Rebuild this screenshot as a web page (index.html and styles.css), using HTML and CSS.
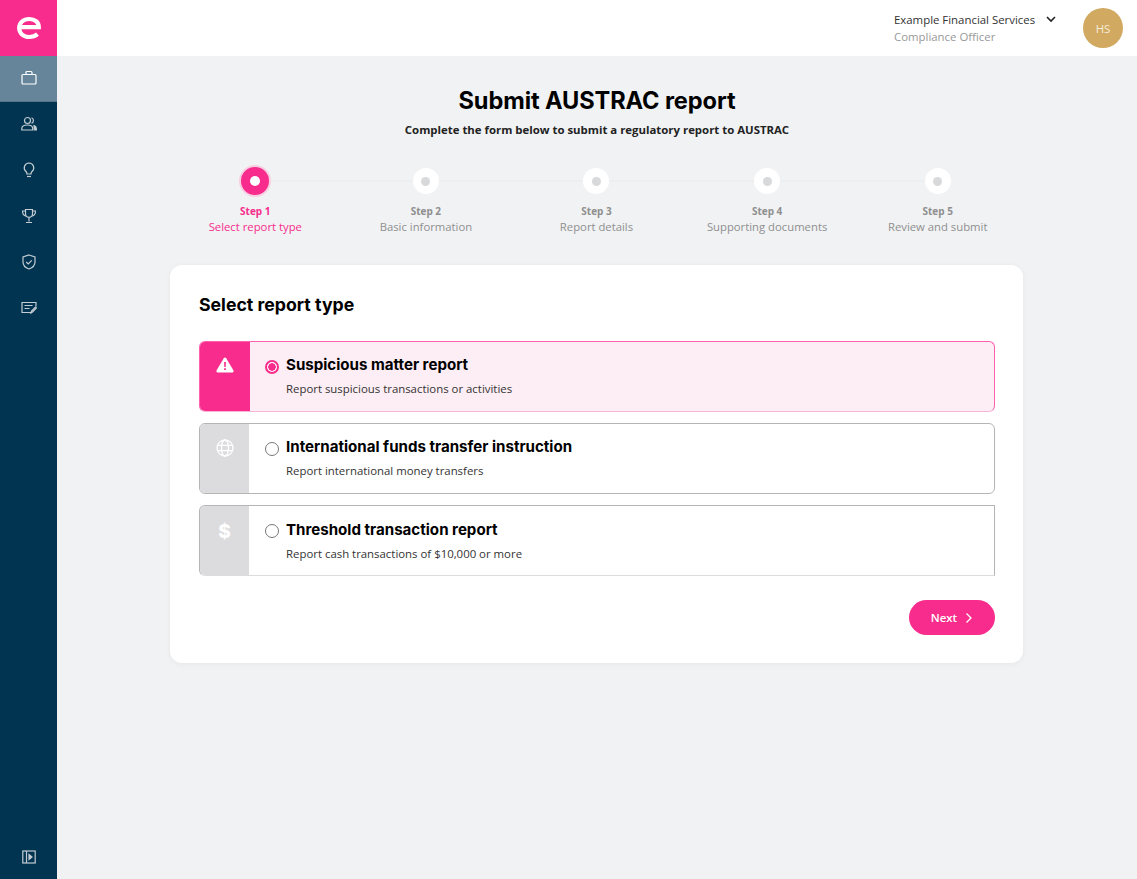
FILE: index.html
```html
<!DOCTYPE html>
<html lang="en">
<head>
<meta charset="utf-8">
<title>Submit AUSTRAC report</title>
<link rel="stylesheet" href="styles.css">
</head>
<body>
<div class="app">
  <aside class="sidebar">
    <div class="logo">
      <svg width="26" height="24" viewBox="0 0 26 24"><path d="M3.200 11.200h19.600c0-5-4-8.200-9.600-8.200C7.300 3 3.200 6.800 3.200 12s4.100 9 10 9c3.300 0 6.200-1 8.300-2.800" fill="none" stroke="#fff" stroke-width="4.200"/></svg>
    </div>
    <nav class="nav">
      <a class="nav-item active"><svg class="ic" viewBox="0 0 16 16"><rect x="1" y="4.500" width="14" height="9.500" rx="1"/><path d="M5 4.500V2.500a1 1 0 0 1 1-1h4a1 1 0 0 1 1 1v2"/></svg></a>
      <a class="nav-item"><svg class="ic" viewBox="0 0 16 16"><circle cx="6.500" cy="4.500" r="3"/><path d="M.8 14v-1.500c0-2.300 2-3.500 5.700-3.500s5.200 1.200 5.200 3.500V14z"/><path d="M10.500 1.700a3 3 0 0 1 0 5.600"/><path class="ic-solid" d="M13 9.500c1.500.5 2.300 1.500 2.300 3V14h-2z"/></svg></a>
      <a class="nav-item"><svg class="ic" viewBox="0 0 16 16"><path d="M8 1a4.800 4.800 0 0 0-3 8.500c.7.700 1 1.300 1 2.500h4c0-1.200.3-1.800 1-2.500A4.800 4.800 0 0 0 8 1z"/><path d="M6 14.500h4"/></svg></a>
      <a class="nav-item"><svg class="ic" viewBox="0 0 16 16"><path d="M4.500 1.500h7v4.300a3.500 3.500 0 0 1-7 0z"/><path d="M4.500 3H1.500c0 3 1 4.500 3.500 5M11.500 3h3c0 3-1 4.500-3.500 5M8 9.500v4M5 14.500h6"/></svg></a>
      <a class="nav-item"><svg class="ic" viewBox="0 0 16 16"><path d="M8 1l6 2v5c0 3.500-2.500 5.800-6 7-3.500-1.200-6-3.500-6-7V3z"/><path d="M5.200 8l2 2 3.600-3.600"/></svg></a>
      <a class="nav-item"><svg class="ic" viewBox="0 0 16 16"><path d="M11 12.500H1v-10h14v4"/><path d="M3.500 5.500h8M3.500 8.500h5M10 13l.5-2 4-4 1 1-4 4z"/></svg></a>
    </nav>
    <a class="nav-item collapse"><svg class="ic" viewBox="0 0 16 16"><rect x="1.800" y="2" width="12.400" height="12"/><path d="M5.500 2v12"/><path class="ic-solid" d="M8 5.500L11 8l-3 2.500z"/></svg></a>
  </aside>
  <div class="content">
    <header class="topbar">
      <div class="org">
        <div class="org-row"><span class="org-name">Example Financial Services</span><svg class="chev" width="10" height="7" viewBox="0 0 10 7"><path d="M1 1l4 4 4-4" fill="none" stroke="#222" stroke-width="1.600"/></svg></div>
        <div class="org-role">Compliance Officer</div>
      </div>
      <div class="avatar">HS</div>
    </header>
    <main class="main">
      <h1 class="title">Submit AUSTRAC report</h1>
      <p class="subtitle">Complete the form below to submit a regulatory report to AUSTRAC</p>
      <ol class="steps">
        <li class="step current"><span class="dot"></span><span class="step-no">Step 1</span><span class="step-name">Select report type</span></li>
        <li class="step"><span class="dot"></span><span class="step-no">Step 2</span><span class="step-name">Basic information</span></li>
        <li class="step"><span class="dot"></span><span class="step-no">Step 3</span><span class="step-name">Report details</span></li>
        <li class="step"><span class="dot"></span><span class="step-no">Step 4</span><span class="step-name">Supporting documents</span></li>
        <li class="step"><span class="dot"></span><span class="step-no">Step 5</span><span class="step-name">Review and submit</span></li>
      </ol>
      <section class="card">
        <h2 class="card-title">Select report type</h2>
        <div class="options">
          <div class="option selected">
            <div class="opt-icon"><svg width="18" height="16" viewBox="0 0 18 16"><path d="M9 .5c.5 0 .9.300 1.200.800l7.300 12.300c.5.900-.1 2-1.200 2H1.700c-1.100 0-1.700-1.100-1.200-2L7.800 1.300C8.100.8 8.500.5 9 .5z" fill="#fff"/><path d="M8.100 5h1.800l-.2 5H8.300zM8.100 11.300h1.800v1.700H8.100z" fill="#f72c8c"/></svg></div>
            <span class="radio"></span>
            <div class="opt-text"><div class="opt-title">Suspicious matter report</div><div class="opt-desc">Report suspicious transactions or activities</div></div>
          </div>
          <div class="option">
            <div class="opt-icon"><svg width="18" height="18" viewBox="0 0 18 18" fill="none" stroke="#fff" stroke-width="1.300"><circle cx="9" cy="9" r="8"/><ellipse cx="9" cy="9" rx="3.500" ry="8"/><path d="M1.500 6.300h15M1.500 11.700h15"/></svg></div>
            <span class="radio"></span>
            <div class="opt-text"><div class="opt-title">International funds transfer instruction</div><div class="opt-desc">Report international money transfers</div></div>
          </div>
          <div class="option square">
            <div class="opt-icon"><span class="dollar">$</span></div>
            <span class="radio"></span>
            <div class="opt-text"><div class="opt-title">Threshold transaction report</div><div class="opt-desc">Report cash transactions of $10,000 or more</div></div>
          </div>
        </div>
        <div class="actions">
          <button class="next">Next<svg width="8" height="12" viewBox="0 0 8 12"><path d="M1.500 1.500L6 6l-4.500 4.500" fill="none" stroke="#fff" stroke-width="1.300"/></svg></button>
        </div>
      </section>
    </main>
  </div>
</div>
</body>
</html>
```
FILE: styles.css
```css
* { box-sizing: border-box; }
html, body { margin: 0; height: 100%; }
body { font-family: "Open Sans", "Liberation Sans", sans-serif; color: #222; background: #f1f2f4; }
.app { display: flex; height: 879px; overflow: hidden; }

.sidebar { width: 57px; flex: none; background: #003450; display: flex; flex-direction: column; }
.logo { height: 56px; background: #f72c8c; display: flex; align-items: center; justify-content: center; }
.nav { flex: 1; display: flex; flex-direction: column; }
.nav-item { height: 46px; padding-bottom: 2px; display: flex; align-items: center; justify-content: center; }
.nav-item.active { background: #66859a; border-bottom: 1px solid #56748a; }
.nav-item.active .ic { stroke: #fff; }
.ic { width: 16px; height: 16px; fill: none; stroke: #c3ccd3; stroke-width: 1.200; }
.ic-solid { fill: #c3ccd3; }
.collapse { height: 44px; padding-bottom: 0; }

.content { flex: 1; min-width: 0; display: flex; flex-direction: column; }
.topbar { height: 56px; background: #fff; display: flex; justify-content: flex-end; align-items: center; padding-right: 14px; flex: none; }
.org { font-size: 11.400px; line-height: 17px; width: 189px; }
.org-row { display: flex; align-items: center; gap: 11px; color: #333; }
.org-role { color: #999; }
.avatar { width: 40px; height: 40px; border-radius: 50%; background: #d1a960; color: #f5ecd9; font-size: 11.400px; display: flex; align-items: center; justify-content: center; }

.main { flex: 1; width: 853px; margin-left: 113px; }
.title { margin: 30px 0 0; padding-left: 1px; text-align: center; font-family: Inter, "Liberation Sans", sans-serif; font-size: 23.600px; line-height: 30px; font-weight: 700; color: #000; letter-spacing: -.1px; }
.subtitle { margin: 6px 0 0; padding-left: 1px; text-align: center; font-size: 11.400px; line-height: 16px; font-weight: 700; color: #222; }

.steps { list-style: none; margin: 27px 0 0; padding: 0; display: grid; grid-template-columns: repeat(5, 1fr); }
.step { position: relative; display: flex; flex-direction: column; align-items: center; text-align: center; }
.step:not(:last-child)::after { content: ""; position: absolute; top: 15px; left: 50%; width: 100%; height: 2px; background: #eceef0; }
.dot { position: relative; z-index: 1; width: 26px; height: 26px; margin-top: 3px; border-radius: 50%; background: #fff; display: flex; align-items: center; justify-content: center; }
.dot::after { content: ""; width: 9px; height: 9px; border-radius: 50%; background: #d8d9db; }
.current .dot { width: 32px; height: 32px; margin-top: 0; background: #f72c8c; border: 2px solid #f8cfe1; }
.current .dot::after { background: #fff; width: 10px; height: 10px; }
.step-no { margin-top: 6px; font-size: 10px; line-height: 16px; font-weight: 700; color: #8f8f8f; }
.step:not(.current) .step-no { margin-top: 9px; }
.step-name { font-size: 11.300px; line-height: 16px; color: #8f8f8f; }
.current .step-no, .current .step-name { color: #f72c8c; }

.card { margin-top: 30px; height: 398px; background: #fff; border-radius: 12px; padding: 28px 28px 28px 29px; box-shadow: 0 1px 6px rgba(0,0,0,.05); }
.card-title { margin: 0 0 24px; font-family: Inter, "Liberation Sans", sans-serif; font-size: 17.700px; line-height: 24px; font-weight: 700; color: #000; }
.options { display: flex; flex-direction: column; gap: 11px; }
.option { height: 71px; display: flex; align-items: stretch; border: 1px solid #b5b5b5; border-radius: 6px; overflow: hidden; background: #fff; }
.option.square { border-radius: 6px 0 0 6px; border-bottom-color: #dcdcdc; }
.option.selected { border-color: #ff5fb0; background: #fdedf4; border-bottom-color: #f9b5d5; }
.opt-icon { width: 49px; margin-right: 1px; flex: none; background: #dcdcde; display: flex; justify-content: center; padding-top: 15px; }
.selected .opt-icon { background: #f72c8c; width: 50px; margin-right: 0; padding-right: 1px; }
.dollar { color: #fff; font-family: Inter, "Liberation Sans", sans-serif; font-weight: 800; font-size: 19px; line-height: 22px; }
.radio { width: 14px; height: 14px; flex: none; margin: 18px 7px 0 15px; border: 1.500px solid #777; border-radius: 50%; background: #fff; }
.selected .radio { border: 2px solid #f72c8c; background: radial-gradient(circle, #f72c8c 0 3.500px, #fff 4px); }
.opt-text { padding-top: 12px; }
.square .opt-text { padding-top: 13px; }
.opt-title { font-family: Inter, "Liberation Sans", sans-serif; font-size: 15.100px; line-height: 22px; font-weight: 700; color: #000; }
.opt-desc { margin-top: 5px; font-size: 11.400px; line-height: 16px; color: #333; }
.actions { display: flex; justify-content: flex-end; margin-top: 24px; }
.next { width: 86px; height: 35px; border: 0; border-radius: 18px; background: #f72c8c; color: #fff; font: 600 11.400px "Open Sans", sans-serif; display: flex; align-items: center; justify-content: center; gap: 8px; }
```
